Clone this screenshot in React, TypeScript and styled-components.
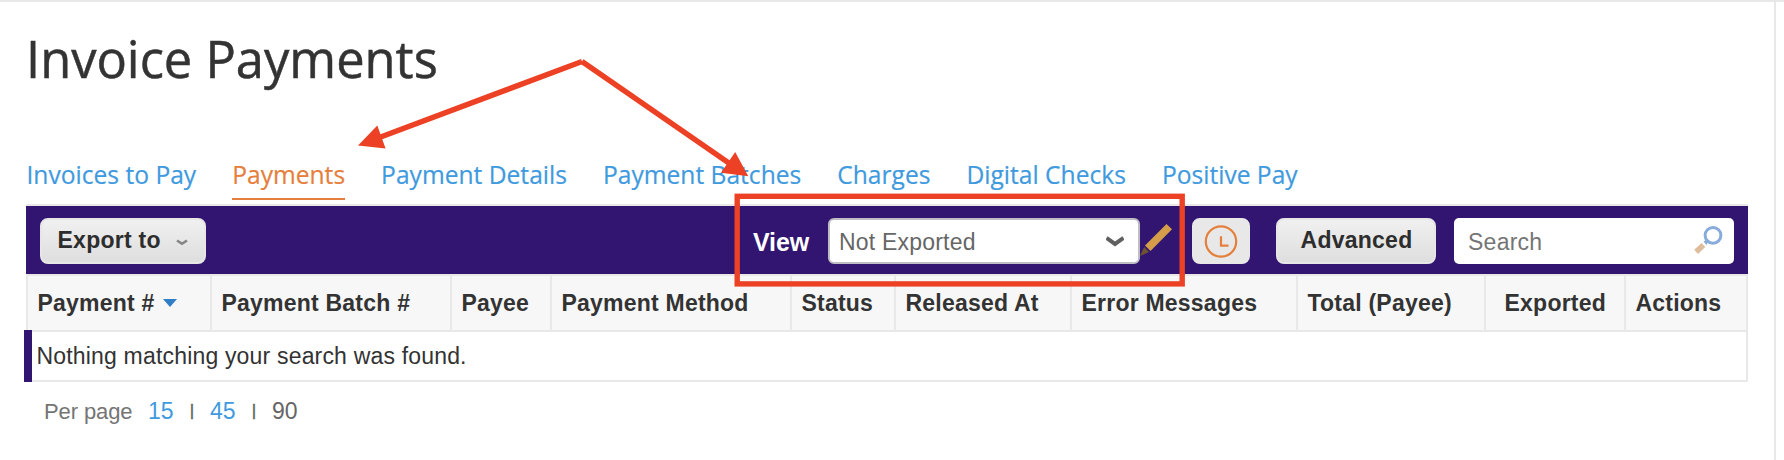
import React from "react";
import styled, { createGlobalStyle } from "styled-components";

const purple = "#321570";
const line = "#e8e8e8";
const blue = "#3f9ade";
const orange = "#e5803c";
const red = "#ed4125";

const GlobalStyle = createGlobalStyle`
  *, *::before, *::after { box-sizing: border-box; }
  body {
    margin: 0;
    background: #fff;
    color: #333;
    font-family: "Liberation Sans", Arial, sans-serif;
    font-size: 23px;
    overflow: hidden;
  }
`;

const Page = styled.div`
  position: relative;
  width: 1784px;
  height: 460px;
  display: flex;
  border-top: 2px solid ${line};
`;

const Main = styled.main`
  width: 1776px;
  padding-left: 26px;
  border-right: 2px solid ${line};
`;

const Title = styled.h1`
  margin: 0;
  padding-top: 22px;
  font: 400 50.6px/70px "Open Sans", sans-serif;
  color: #333;
  -webkit-text-stroke: 0.5px #333;
`;

const Tabs = styled.nav`
  display: flex;
  gap: 36px;
  margin-top: 61px;
  padding-left: 0.5px;
  height: 49px;
`;

const Tab = styled.a<{ $active?: boolean }>`
  height: 45px;
  font: 400 24.6px/40px "Open Sans", sans-serif;
  white-space: nowrap;
  -webkit-text-stroke: 0.2px currentColor;
  color: ${(p) => (p.$active ? orange : blue)};
  border-bottom: 2px solid ${(p) => (p.$active ? orange : "transparent")};
`;

const Panel = styled.section`
  width: 1722px;
  border-top: 2px solid ${line};
`;

const Toolbar = styled.div`
  display: flex;
  height: 68px;
  padding: 12px 14px 10px;
  background: ${purple};
`;

const Button = styled.button<{ $width: number }>`
  display: flex;
  align-items: center;
  width: ${(p) => p.$width}px;
  height: 46px;
  padding: 0;
  border: 2px solid #e6e6e6;
  border-radius: 8px;
  background: linear-gradient(#f0f0f0, #dedede);
  color: #2d2d2d;
  font: 700 23px/40px "Liberation Sans", Arial, sans-serif;
  letter-spacing: 0.25px;
`;

const ExportButton = styled(Button)`
  padding: 0 0 2px 15.5px;
  gap: 15px;
  svg { margin-top: 5px; }
`;

const AdvancedButton = styled(Button)`
  justify-content: center;
  margin-left: 26px;
  padding: 0 0 2px 1px;
`;

const HistoryButton = styled(Button)`
  justify-content: center;
  margin-left: 20px;
  background: #e8e8e8;
  border-color: #e8e8e8;
`;

const ViewLabel = styled.label`
  margin-left: auto;
  width: 75px;
  font-size: 25px;
  font-weight: 700;
  line-height: 49px;
  letter-spacing: -0.1px;
  color: #fff;
`;

const Select = styled.div`
  display: flex;
  align-items: center;
  justify-content: space-between;
  width: 312px;
  height: 46px;
  padding: 2px 14px 0 9px;
  border: 2px solid #bfbdc4;
  border-radius: 6px;
  background: #fff;
  color: #666;
  letter-spacing: 0.2px;
`;

const PencilSlot = styled.span`
  width: 32px;
  padding-top: 6px;
`;

const Search = styled.div`
  display: flex;
  justify-content: space-between;
  width: 280px;
  height: 46px;
  margin-left: 18px;
  padding: 7px 11px 0 14px;
  border-radius: 5px;
  background: #fff;
  color: #757575;
  letter-spacing: 0.25px;
  line-height: 34px;
`;

const Table = styled.table`
  width: 1722px;
  border-collapse: separate;
  border-spacing: 0;
  table-layout: fixed;
`;

const HeaderCell = styled.th<{ $width: number; $right?: boolean }>`
  width: ${(p) => p.$width}px;
  height: 58px;
  padding: 1px 9px 0 9.5px;
  text-align: ${(p) => (p.$right ? "right" : "left")};
  ${(p) => p.$right && "padding-right: 18px;"}
  white-space: nowrap;
  background: #f7f7f7;
  border: 2px solid ${line};
  border-right: 0;
  letter-spacing: 0.22px;
  &:last-child { border-right: 2px solid ${line}; }
  svg { margin-left: 8px; vertical-align: 4px; }
`;

const EmptyCell = styled.td`
  position: relative;
  height: 50px;
  padding: 0 0 0 10.5px;
  line-height: 48px;
  border-right: 2px solid ${line};
  border-bottom: 2px solid ${line};
  letter-spacing: 0.18px;
`;

const RowMarker = styled.span`
  position: absolute;
  left: -2px;
  top: -2px;
  width: 8px;
  height: 52px;
  background: ${purple};
`;

const Pager = styled.div`
  display: flex;
  align-items: baseline;
  padding: 16px 0 0 18px;
  line-height: 26px;
  color: #666;
`;

const PerPage = styled.span`
  width: 104px;
  font-size: 22px;
  letter-spacing: -0.1px;
  color: #757575;
`;

const PageSize = styled.span<{ $link?: boolean }>`
  width: 26px;
  color: ${(p) => (p.$link ? blue : "#666")};
`;

const Divider = styled.span`
  position: relative;
  top: -3px;
  width: 36px;
  text-align: center;
  font-size: 17px;
  -webkit-text-stroke: 0.5px #666;
`;

const Annotations = styled.svg`
  position: absolute;
  left: 0;
  top: -2px;
  pointer-events: none;
`;

const tabs = [
  "Invoices to Pay",
  "Payments",
  "Payment Details",
  "Payment Batches",
  "Charges",
  "Digital Checks",
  "Positive Pay",
];

const columns = [
  { label: "Payment #", width: 184, sorted: true },
  { label: "Payment Batch #", width: 240 },
  { label: "Payee", width: 100 },
  { label: "Payment Method", width: 240 },
  { label: "Status", width: 104 },
  { label: "Released At", width: 176 },
  { label: "Error Messages", width: 226 },
  { label: "Total (Payee)", width: 188 },
  { label: "Exported", width: 140, right: true },
  { label: "Actions", width: 124 },
];

const Pencil = () => (
  <svg width="33" height="33" viewBox="0 0 33 33" display="block">
    <path d="M26.5 0 L32 5.3 L10.5 27 L5 21.5 Z" fill="#d59d49" />
    <path d="M4.2 23 L9 28 L0 32 Z" fill="#6f5430" />
  </svg>
);

const Clock = () => (
  <svg width="34" height="34" viewBox="0 0 34 34" fill="none" stroke={orange} strokeWidth="2.2">
    <circle cx="17" cy="17.5" r="15.2" />
    <path d="M17 12.2V21.7H24.5" />
  </svg>
);

const Magnifier = () => (
  <svg width="29" height="29" viewBox="0 0 29 29">
    <circle cx="19" cy="10.3" r="7.9" fill="none" stroke="#87abdb" strokeWidth="3" />
    <path d="M9.5 16.5 L12.5 14.8 L14.2 17 L12.5 20 Z" fill="#87abdb" />
    <path d="M7.5 18 L11.3 22 L4 29 L0.2 24.8 Z" fill="#dfbd9c" />
  </svg>
);

export default function App() {
  return (
    <>
      <GlobalStyle />
      <Page>
        <Main>
          <Title>Invoice Payments</Title>
          <Tabs>
            {tabs.map((t) => (
              <Tab key={t} $active={t === "Payments"}>{t}</Tab>
            ))}
          </Tabs>
          <Panel>
            <Toolbar>
              <ExportButton $width={166}>
                Export to
                <svg width="12" height="8" viewBox="0 0 12 8">
                  <path d="M1 1.5 L6 4.8 L11 1.5" fill="none" stroke="#858585" strokeWidth="2.6" />
                </svg>
              </ExportButton>
              <ViewLabel>View</ViewLabel>
              <Select>
                Not Exported
                <svg width="18" height="12" viewBox="0 0 18 12">
                  <path d="M0.5 2 L9 8 L17.5 2" fill="none" stroke="#606060" strokeWidth="4" />
                </svg>
              </Select>
              <PencilSlot><Pencil /></PencilSlot>
              <HistoryButton $width={58} aria-label="History"><Clock /></HistoryButton>
              <AdvancedButton $width={160}>Advanced</AdvancedButton>
              <Search>Search<Magnifier /></Search>
            </Toolbar>
            <Table>
              <thead>
                <tr>
                  {columns.map((c) => (
                    <HeaderCell key={c.label} $width={c.width} $right={c.right}>
                      {c.label}
                      {c.sorted && (
                        <svg width="14" height="8" viewBox="0 0 14 8">
                          <path d="M0 0H14L7 8Z" fill="#307fc6" />
                        </svg>
                      )}
                    </HeaderCell>
                  ))}
                </tr>
              </thead>
              <tbody>
                <tr>
                  <EmptyCell colSpan={columns.length}>
                    <RowMarker />
                    Nothing matching your search was found.
                  </EmptyCell>
                </tr>
              </tbody>
            </Table>
          </Panel>
          <Pager>
            <PerPage>Per page</PerPage>
            <PageSize $link>15</PageSize>
            <Divider>|</Divider>
            <PageSize $link>45</PageSize>
            <Divider>|</Divider>
            <PageSize>90</PageSize>
          </Pager>
        </Main>
        <Annotations width="1784" height="460" viewBox="0 0 1784 460">
          <g fill="none" stroke={red} strokeWidth="5.4">
            <rect x="737.2" y="196.3" width="445" height="87.6" />
            <path d="M582 61.5 L378 138" />
            <path d="M582 61.5 L731 164.5" />
          </g>
          <path d="M358 145.6 L377.3 125.5 L385.6 148.6 Z M748.3 176.2 L735.2 152 L721 172.7 Z" fill={red} />
        </Annotations>
      </Page>
    </>
  );
}
